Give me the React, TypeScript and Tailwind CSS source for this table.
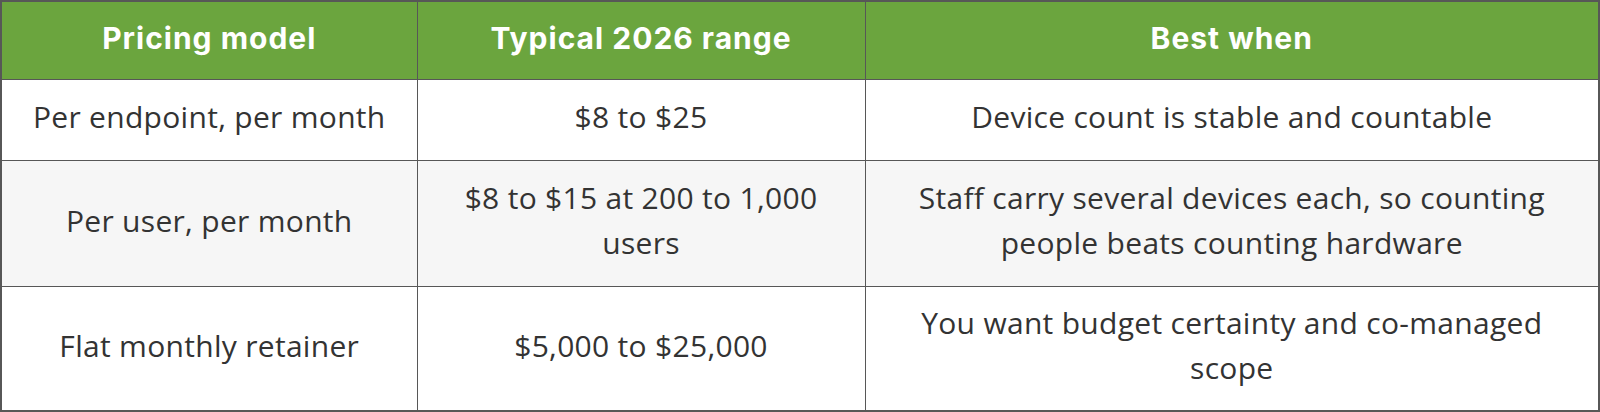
import React from "react";

const rows = [
  { a: "Per endpoint, per month", b: "$8 to $25", c: "Device count is stable and countable", h: "h-[81px]", bg: "bg-white" },
  { a: "Per user, per month", b: "$8 to $15 at 200 to 1,000 users", c: "Staff carry several devices each, so counting people beats counting hardware", h: "h-[126px]", bg: "bg-[#f6f6f6]" },
  { a: "Flat monthly retainer", b: "$5,000 to $25,000", c: "You want budget certainty and co-managed scope", h: "h-[125px]", bg: "bg-white" },
];

export default function App() {
  return (
    <div className="w-[1600px] h-[412px] bg-white">
      <table className="w-[1600px] table-fixed border-collapse border-2 border-[#575757]">
        <colgroup>
          <col className="w-[416px]" />
          <col className="w-[448px]" />
          <col />
        </colgroup>
        <thead>
          <tr className="h-[78px] bg-[#6ba53e]">
            {["Pricing model", "Typical 2026 range", "Best when"].map((t) => (
              <th
                key={t}
                className="border border-[#575757] px-4 pb-[3px] text-center align-middle text-[30px] font-bold tracking-[1px] text-white [font-family:Inter,'Liberation_Sans',sans-serif]"
              >
                {t}
              </th>
            ))}
          </tr>
        </thead>
        <tbody>
          {rows.map((r) => (
            <tr key={r.a} className={`${r.h} ${r.bg}`}>
              {[r.a, r.b, r.c].map((t, i) => (
                <td
                  key={i}
                  className="border border-[#575757] px-[30px] pb-[6px] text-center align-middle text-[30px] leading-[45px] tracking-[0.3px] text-[#333333] [font-family:'Open_Sans',sans-serif]"
                >
                  {t}
                </td>
              ))}
            </tr>
          ))}
        </tbody>
      </table>
    </div>
  );
}
